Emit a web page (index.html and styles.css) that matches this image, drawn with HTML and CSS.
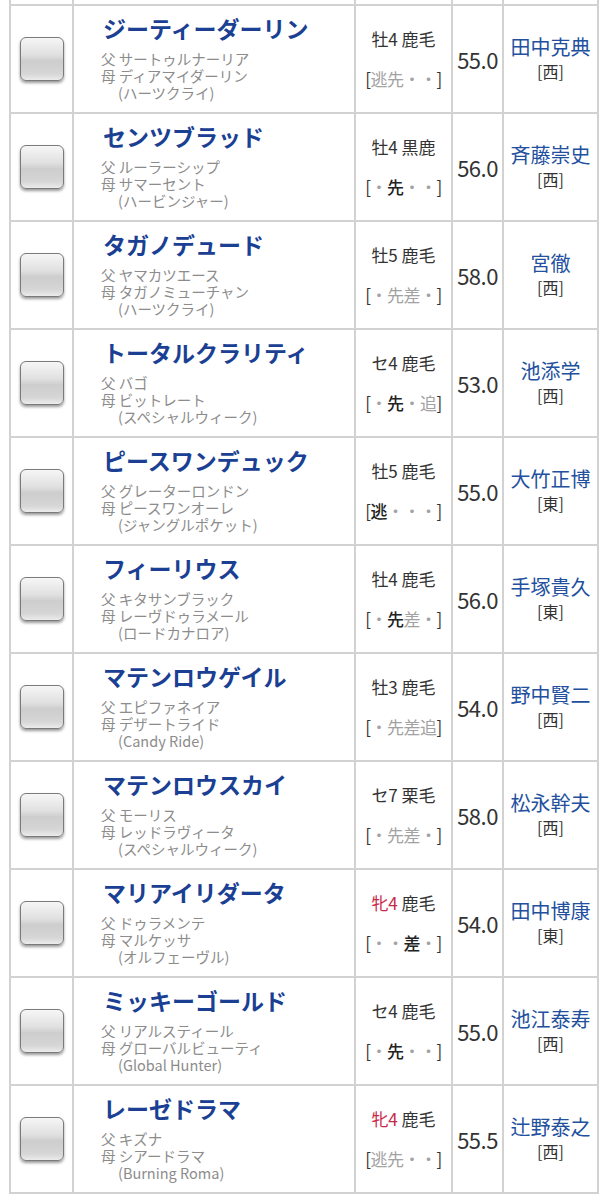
FILE: index.html
```html
<!DOCTYPE html>
<html lang="ja">
<head>
    <meta charset="UTF-8">
    <meta name="viewport" content="width=device-width, initial-scale=1.0">
    <title>出馬表</title>
    <link rel="stylesheet" href="styles.css">
</head>
<body>
    <div id="entry-list">
        <table class="entry-table">
            <colgroup>
                <col class="w-check">
                <col class="w-horse">
                <col class="w-info">
                <col class="w-weight">
                <col class="w-jockey">
            </colgroup>
            <!-- tail of the previous row -->
            <tr class="prev-row"><td></td><td></td><td></td><td></td><td></td></tr>

            <tr>
                <td class="col-check"><span class="checkbox"></span></td>
                <td class="col-horse">
                    <div class="horse-name">ジーティーダーリン</div>
                    <div class="pedigree">父 サートゥルナーリア</div>
                    <div class="pedigree">母 ディアマイダーリン</div>
                    <div class="pedigree bms">(ハーツクライ)</div>
                </td>
                <td class="col-info">
                    <div class="sex-age">牡4 鹿毛</div>
                    <div class="run-style"><em>[</em>逃先・・<em>]</em></div>
                </td>
                <td class="col-weight">55.0</td>
                <td class="col-jockey"><div class="jockey">田中克典</div><div class="belong">[西]</div></td>
            </tr>

            <tr>
                <td class="col-check"><span class="checkbox"></span></td>
                <td class="col-horse">
                    <div class="horse-name">センツブラッド</div>
                    <div class="pedigree">父 ルーラーシップ</div>
                    <div class="pedigree">母 サマーセント</div>
                    <div class="pedigree bms">(ハービンジャー)</div>
                </td>
                <td class="col-info">
                    <div class="sex-age">牡4 黒鹿</div>
                    <div class="run-style"><em>[</em>・<b>先</b>・・<em>]</em></div>
                </td>
                <td class="col-weight">56.0</td>
                <td class="col-jockey"><div class="jockey">斉藤崇史</div><div class="belong">[西]</div></td>
            </tr>

            <tr>
                <td class="col-check"><span class="checkbox"></span></td>
                <td class="col-horse">
                    <div class="horse-name">タガノデュード</div>
                    <div class="pedigree">父 ヤマカツエース</div>
                    <div class="pedigree">母 タガノミューチャン</div>
                    <div class="pedigree bms">(ハーツクライ)</div>
                </td>
                <td class="col-info">
                    <div class="sex-age">牡5 鹿毛</div>
                    <div class="run-style"><em>[</em>・先差・<em>]</em></div>
                </td>
                <td class="col-weight">58.0</td>
                <td class="col-jockey"><div class="jockey">宮徹</div><div class="belong">[西]</div></td>
            </tr>

            <tr>
                <td class="col-check"><span class="checkbox"></span></td>
                <td class="col-horse">
                    <div class="horse-name">トータルクラリティ</div>
                    <div class="pedigree">父 バゴ</div>
                    <div class="pedigree">母 ビットレート</div>
                    <div class="pedigree bms">(スペシャルウィーク)</div>
                </td>
                <td class="col-info">
                    <div class="sex-age">セ4 鹿毛</div>
                    <div class="run-style"><em>[</em>・<b>先</b>・追<em>]</em></div>
                </td>
                <td class="col-weight">53.0</td>
                <td class="col-jockey"><div class="jockey">池添学</div><div class="belong">[西]</div></td>
            </tr>

            <tr>
                <td class="col-check"><span class="checkbox"></span></td>
                <td class="col-horse">
                    <div class="horse-name">ピースワンデュック</div>
                    <div class="pedigree">父 グレーターロンドン</div>
                    <div class="pedigree">母 ピースワンオーレ</div>
                    <div class="pedigree bms">(ジャングルポケット)</div>
                </td>
                <td class="col-info">
                    <div class="sex-age">牡5 鹿毛</div>
                    <div class="run-style"><em>[</em><b>逃</b>・・・<em>]</em></div>
                </td>
                <td class="col-weight">55.0</td>
                <td class="col-jockey"><div class="jockey">大竹正博</div><div class="belong">[東]</div></td>
            </tr>

            <tr>
                <td class="col-check"><span class="checkbox"></span></td>
                <td class="col-horse">
                    <div class="horse-name">フィーリウス</div>
                    <div class="pedigree">父 キタサンブラック</div>
                    <div class="pedigree">母 レーヴドゥラメール</div>
                    <div class="pedigree bms">(ロードカナロア)</div>
                </td>
                <td class="col-info">
                    <div class="sex-age">牡4 鹿毛</div>
                    <div class="run-style"><em>[</em>・<b>先</b>差・<em>]</em></div>
                </td>
                <td class="col-weight">56.0</td>
                <td class="col-jockey"><div class="jockey">手塚貴久</div><div class="belong">[東]</div></td>
            </tr>

            <tr>
                <td class="col-check"><span class="checkbox"></span></td>
                <td class="col-horse">
                    <div class="horse-name">マテンロウゲイル</div>
                    <div class="pedigree">父 エピファネイア</div>
                    <div class="pedigree">母 デザートライド</div>
                    <div class="pedigree bms">(Candy Ride)</div>
                </td>
                <td class="col-info">
                    <div class="sex-age">牡3 鹿毛</div>
                    <div class="run-style"><em>[</em>・先差追<em>]</em></div>
                </td>
                <td class="col-weight">54.0</td>
                <td class="col-jockey"><div class="jockey">野中賢二</div><div class="belong">[西]</div></td>
            </tr>

            <tr>
                <td class="col-check"><span class="checkbox"></span></td>
                <td class="col-horse">
                    <div class="horse-name">マテンロウスカイ</div>
                    <div class="pedigree">父 モーリス</div>
                    <div class="pedigree">母 レッドラヴィータ</div>
                    <div class="pedigree bms">(スペシャルウィーク)</div>
                </td>
                <td class="col-info">
                    <div class="sex-age">セ7 栗毛</div>
                    <div class="run-style"><em>[</em>・先差・<em>]</em></div>
                </td>
                <td class="col-weight">58.0</td>
                <td class="col-jockey"><div class="jockey">松永幹夫</div><div class="belong">[西]</div></td>
            </tr>

            <tr>
                <td class="col-check"><span class="checkbox"></span></td>
                <td class="col-horse">
                    <div class="horse-name">マリアイリダータ</div>
                    <div class="pedigree">父 ドゥラメンテ</div>
                    <div class="pedigree">母 マルケッサ</div>
                    <div class="pedigree bms">(オルフェーヴル)</div>
                </td>
                <td class="col-info">
                    <div class="sex-age"><span class="mare">牝4</span> 鹿毛</div>
                    <div class="run-style"><em>[</em>・・<b>差</b>・<em>]</em></div>
                </td>
                <td class="col-weight">54.0</td>
                <td class="col-jockey"><div class="jockey">田中博康</div><div class="belong">[東]</div></td>
            </tr>

            <tr>
                <td class="col-check"><span class="checkbox"></span></td>
                <td class="col-horse">
                    <div class="horse-name">ミッキーゴールド</div>
                    <div class="pedigree">父 リアルスティール</div>
                    <div class="pedigree">母 グローバルビューティ</div>
                    <div class="pedigree bms">(Global Hunter)</div>
                </td>
                <td class="col-info">
                    <div class="sex-age">セ4 鹿毛</div>
                    <div class="run-style"><em>[</em>・<b>先</b>・・<em>]</em></div>
                </td>
                <td class="col-weight">55.0</td>
                <td class="col-jockey"><div class="jockey">池江泰寿</div><div class="belong">[西]</div></td>
            </tr>

            <tr>
                <td class="col-check"><span class="checkbox"></span></td>
                <td class="col-horse">
                    <div class="horse-name">レーゼドラマ</div>
                    <div class="pedigree">父 キズナ</div>
                    <div class="pedigree">母 シアードラマ</div>
                    <div class="pedigree bms">(Burning Roma)</div>
                </td>
                <td class="col-info">
                    <div class="sex-age"><span class="mare">牝4</span> 鹿毛</div>
                    <div class="run-style"><em>[</em>逃先・・<em>]</em></div>
                </td>
                <td class="col-weight">55.5</td>
                <td class="col-jockey"><div class="jockey">辻野泰之</div><div class="belong">[西]</div></td>
            </tr>
        </table>
    </div>
</body>
</html>
```

FILE: styles.css
```css
/* entry table */
body {
    margin: 0;
    background: #fff;
    font-family: "Noto Sans CJK JP", "Noto Sans", sans-serif;
    color: #333;
}

#entry-list {
    padding: 0 0 0 9px;
}

.entry-table {
    border-collapse: collapse;
    table-layout: fixed;
    width: 590px;
}

.w-check { width: 63px; }
.w-horse { width: 282px; }
.w-info { width: 97px; }
.w-weight { width: 51px; }
.w-jockey { width: 95px; }

.entry-table td {
    border: 2px solid #d2d2d2;
    padding: 0;
    height: 106px;
}

.entry-table .prev-row td {
    border-top: none;
    height: 4px;
}

.col-check {
    text-align: center;
    vertical-align: middle;
}

.checkbox {
    display: inline-block;
    width: 42px;
    height: 42px;
    border: 1px solid #7a7a7a;
    border-radius: 6px;
    background: linear-gradient(to bottom, #f6f6f6 0%, #e0e0e0 40%, #cdcdcd 55%, #d6d6d6 85%, #ececec 100%);
    box-shadow: 0 2px 3px rgba(0, 0, 0, 0.4);
    vertical-align: middle;
}

.entry-table .col-horse {
    vertical-align: top;
    padding-left: 27px;
}

.horse-name {
    font-size: 23px;
    line-height: 28px;
    font-weight: bold;
    color: #1a3f93;
    padding-left: 2px;
    margin: 8px 0 8px;
    white-space: nowrap;
}

.pedigree {
    font-size: 14.5px;
    line-height: 17px;
    height: 17px;
    color: #8c8c8c;
    white-space: nowrap;
}

.pedigree.bms {
    padding-left: 17px;
}

.col-info {
    text-align: center;
    vertical-align: middle;
}

.sex-age {
    font-size: 17px;
    line-height: 20px;
    margin-bottom: 20px;
    color: #333;
}

.mare {
    color: #c8284a;
}

.run-style {
    font-size: 17px;
    line-height: 20px;
    color: #a2a2a2;
    white-space: nowrap;
    letter-spacing: -0.5px;
}

.run-style em {
    font-style: normal;
    color: #333;
}

.run-style b {
    font-weight: 500;
    color: #222;
}

.col-weight {
    text-align: center;
    vertical-align: middle;
    font-size: 22px;
    color: #333;
    letter-spacing: -0.5px;
}

.col-jockey {
    text-align: center;
    vertical-align: middle;
}

.jockey {
    font-size: 20px;
    line-height: 25px;
    color: #22509e;
    white-space: nowrap;
}

.belong {
    font-size: 16px;
    line-height: 25px;
    color: #333;
}
```
